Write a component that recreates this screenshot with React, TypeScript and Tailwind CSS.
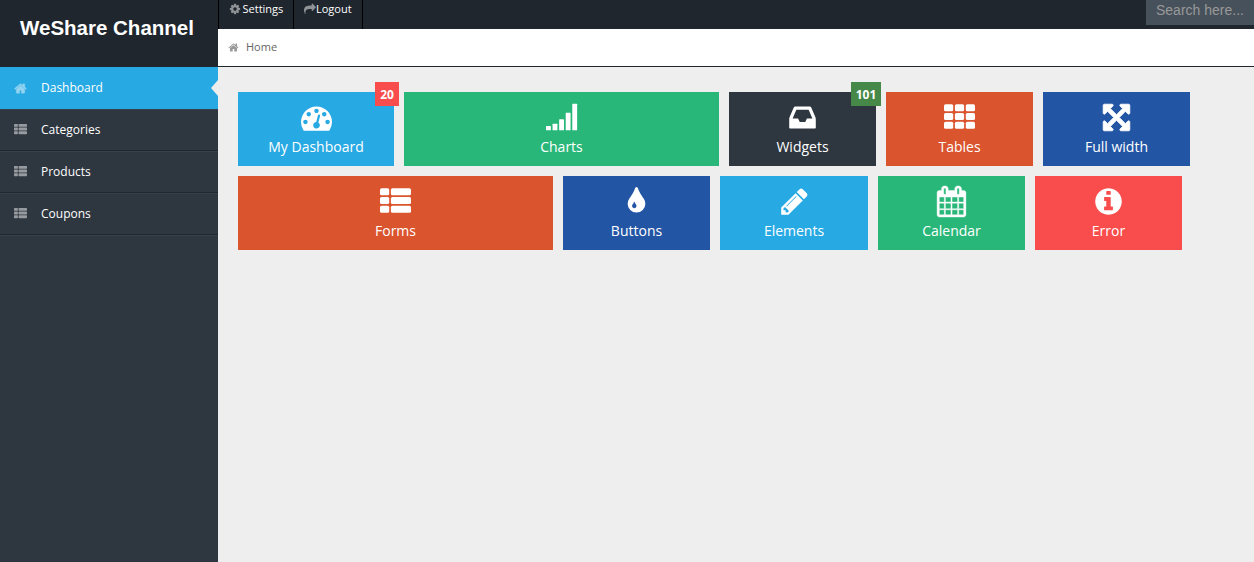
import React from "react";

const paths = {
  dashboard: "M384 1152q0-53-37.5-90.5t-90.5-37.5-90.5 37.5-37.5 90.5 37.5 90.5 90.5 37.5 90.5-37.5 37.5-90.5zm192-448q0-53-37.5-90.5t-90.5-37.5-90.5 37.5-37.5 90.5 37.5 90.5 90.5 37.5 90.5-37.5 37.5-90.5zm428 481l101-382q6-26-7.5-48.5t-38.5-29.5-48 6.5-30 39.5l-101 382q-60 5-107 43.5t-63 98.5q-20 77 20 146t117 89 146-20 89-117q16-60-6-117t-72-91zm660-33q0-53-37.5-90.5t-90.5-37.5-90.5 37.5-37.5 90.5 37.5 90.5 90.5 37.5 90.5-37.5 37.5-90.5zm-640-640q0-53-37.5-90.5t-90.5-37.5-90.5 37.5-37.5 90.5 37.5 90.5 90.5 37.5 90.5-37.5 37.5-90.5zm448 192q0-53-37.5-90.5t-90.5-37.5-90.5 37.5-37.5 90.5 37.5 90.5 90.5 37.5 90.5-37.5 37.5-90.5zm320 448q0 261-141 483-19 29-54 29h-1402q-35 0-54-29-141-221-141-483 0-182 71-348t191-286 286-191 348-71 348 71 286 191 191 286 71 348z",
  inbox: "M1151 960h316q-1-3-2.5-8t-2.5-8l-212-496h-708l-212 496q-1 2-2.5 8t-2.5 8h316l95 192h320zm513 30v482q0 26-19 45t-45 19h-1408q-26 0-45-19t-19-45v-482q0-62 25-123l238-552q10-25 36.5-42t52.5-17h832q26 0 52.5 17t36.5 42l238 552q25 61 25 123z",
  expand: "M1411 541l-355 355 355 355 144-144q29-31 70-14 39 17 39 59v448q0 26-19 45t-45 19h-448q-42 0-59-40-17-39 14-69l144-144-355-355-355 355 144 144q31 30 14 69-17 40-59 40h-448q-26 0-45-19t-19-45v-448q0-42 40-59 39-17 69 14l144 144 355-355-355-355-144 144q-19 19-45 19-12 0-24-5-40-17-40-59v-448q0-26 19-45t45-19h448q42 0 59 40 17 39-14 69l-144 144 355 355 355-355-144-144q-31-30-14-69 17-40 59-40h448q26 0 45 19t19 45v448q0 42-39 59-13 5-25 5-26 0-45-19z",
  drop: "M896 1152q0-36-20-69-1-1-15.5-22.5t-25.5-38-25-44-21-50.5q-4-16-21-16t-21 16q-7 23-21 50.5t-25 44-25.5 38-15.5 22.5q-20 33-20 69 0 53 37.5 90.5t90.5 37.5 90.5-37.5 37.5-90.5zm512-128q0 212-150 362t-362 150-362-150-150-362q0-145 81-275 6-9 62.5-90.5t101-151 99.5-178 83-201.5q9-30 34-47t51-17 51.5 17 33.5 47q28 93 83 201.5t99.5 178 101 151 62.5 90.5q81 127 81 275z",
  pencil: "M491 1536l91-91-235-235-91 91v107h128v128h107zm523-928q0-22-22-22-10 0-17 7l-542 542q-7 7-7 17 0 22 22 22 10 0 17-7l542-542q7-7 7-17zm-54-192l416 416-832 832h-416v-416zm683 96q0 53-37 90l-166 166-416-416 166-165q36-38 90-38 53 0 91 38l235 234q37 39 37 91z",
  calendar: "M192 1664h288v-288h-288v288zm352 0h320v-288h-320v288zm-352-352h288v-320h-288v320zm352 0h320v-320h-320v320zm-352-384h288v-288h-288v288zm736 736h320v-288h-320v288zm-384-736h320v-288h-320v288zm768 736h288v-288h-288v288zm-384-352h320v-320h-320v320zm-352-864v-288q0-13-9.5-22.5t-22.5-9.5h-64q-13 0-22.5 9.5t-9.5 22.5v288q0 13 9.5 22.5t22.5 9.5h64q13 0 22.5-9.5t9.5-22.5zm736 864h288v-320h-288v320zm-384-384h320v-288h-320v288zm384 0h288v-288h-288v288zm32-480v-288q0-13-9.5-22.5t-22.5-9.5h-64q-13 0-22.5 9.5t-9.5 22.5v288q0 13 9.5 22.5t22.5 9.5h64q13 0 22.5-9.5t9.5-22.5zm384-64v1280q0 52-38 90t-90 38h-1408q-52 0-90-38t-38-90v-1280q0-52 38-90t90-38h128v-96q0-66 47-113t113-47h64q66 0 113 47t47 113v96h384v-96q0-66 47-113t113-47h64q66 0 113 47t47 113v96h128q52 0 90 38t38 90z",
  info: "M1152 1376v-160q0-14-9-23t-23-9h-96v-512q0-14-9-23t-23-9h-320q-14 0-23 9t-9 23v160q0 14 9 23t23 9h96v320h-96q-14 0-23 9t-9 23v160q0 14 9 23t23 9h448q14 0 23-9t9-23zm-128-896v-160q0-14-9-23t-23-9h-192q-14 0-23 9t-9 23v160q0 14 9 23t23 9h192q14 0 23-9t9-23zm640 416q0 209-103 385.5t-279.5 279.5-385.5 103-385.5-103-279.5-279.5-103-385.5 103-385.5 279.5-279.5 385.5-103 385.5 103 279.5 279.5 103 385.5z",
  home: "M1472 992v480q0 26-19 45t-45 19h-384v-384h-256v384h-384q-26 0-45-19t-19-45v-480q0-1 .5-3t.5-3l575-474 575 474q1 2 1 6zm223-69l-62 74q-8 9-21 11h-3q-13 0-21-7l-692-577-692 577q-12 8-24 7-13-2-21-11l-62-74q-8-10-7-23.5t11-21.5l719-599q32-26 76-26t76 26l244 204v-195q0-14 9-23t23-9h192q14 0 23 9t9 23v408l219 182q10 8 11 21.5t-7 23.5z",
  cog: "M1152 896q0-106-75-181t-181-75-181 75-75 181 75 181 181 75 181-75 75-181zm512-109v222q0 12-8 23t-20 13l-185 28q-19 54-39 91 35 50 107 138 10 12 10 25t-9 23q-27 37-99 108t-94 71q-12 0-26-9l-138-108q-44 23-91 38-16 136-29 186-7 28-36 28h-222q-14 0-24.5-8.5t-11.5-21.5l-28-184q-49-16-90-37l-141 107q-10 9-25 9-14 0-25-11-126-114-165-168-7-10-7-23 0-12 8-23 15-21 51-66.5t54-70.5q-27-50-41-99l-183-27q-13-2-21-12.5t-8-23.5v-222q0-12 8-23t19-13l186-28q14-46 39-92-40-57-107-138-10-12-10-24 0-10 9-23 26-36 98.5-107.5t94.5-71.5q13 0 26 10l138 107q44-23 91-38 16-136 29-186 7-28 36-28h222q14 0 24.5 8.5t11.5 21.5l28 184q49 16 90 37l142-107q9-9 24-9 13 0 25 10 129 119 165 170 7 8 7 22 0 12-8 23-15 21-51 66.5t-54 70.5q26 50 41 98l183 28q13 2 21 12.5t8 23.5z",
  share: "M1792 640q0 26-19 45l-512 512q-19 19-45 19t-45-19-19-45v-256h-224q-98 0-175.5 6t-154 21.5-133 42.5-105.5 69.5-80 101-48.5 138.5-17.5 181q0 55 5 123 0 6 2.5 23.5t2.5 26.5q0 15-8.5 25t-23.5 10q-16 0-28-17-7-9-13-22t-13.5-30-10.5-24q-127-285-127-451 0-199 53-333 162-403 875-403h224v-256q0-26 19-45t45-19 45 19l512 512q19 19 19 45z",
};

type IconName = keyof typeof paths | "signal" | "grid" | "list";

const gridRows = [128, 633, 1138];

function Icon({ name, className }: { name: IconName; className: string }) {
  let body: React.ReactNode;
  if (name === "signal") {
    body = [256, 384, 640, 1024, 1536].map((h, i) => (
      <rect key={i} x={i * 380} y={1640 - h} width={280} height={h} rx={24} />
    ));
  } else if (name === "grid") {
    body = gridRows.flatMap((y) =>
      [0, 630, 1260].map((x) => (
        <rect key={`${x}-${y}`} x={x} y={y} width={532} height={405} rx={90} />
      )),
    );
  } else if (name === "list") {
    body = gridRows.map((y) => (
      <g key={y}>
        <rect x={0} y={y} width={532} height={405} rx={90} />
        <rect x={630} y={y} width={1162} height={405} rx={90} />
      </g>
    ));
  } else {
    body = <path d={paths[name]} />;
  }
  return (
    <svg viewBox="0 0 1792 1792" fill="currentColor" className={`shrink-0 overflow-visible ${className}`}>
      {body}
    </svg>
  );
}

type TileData = { label: string; icon: IconName; iconClass?: string; box: string; badge?: string; badgeColor?: string };

const rows: TileData[][] = [
  [
    { label: "My Dashboard", icon: "dashboard", box: "w-[156px] bg-[#27a9e3]", badge: "20", badgeColor: "w-6 bg-[#f94d4d]" },
    { label: "Charts", icon: "signal", box: "w-[315px] bg-[#28b779]" },
    { label: "Widgets", icon: "inbox", box: "w-[147px] bg-[#2e363f]", badge: "101", badgeColor: "w-[30px] bg-[#468847]" },
    { label: "Tables", icon: "grid", box: "w-[147px] bg-[#da542e]" },
    { label: "Full width", icon: "expand", iconClass: "stroke-current stroke-[50]", box: "w-[147px] bg-[#2255a4]" },
  ],
  [
    { label: "Forms", icon: "list", box: "w-[315px] bg-[#da542e]" },
    { label: "Buttons", icon: "drop", box: "w-[147px] bg-[#2255a4]" },
    { label: "Elements", icon: "pencil", box: "w-[148px] bg-[#27a9e3]" },
    { label: "Calendar", icon: "calendar", iconClass: "stroke-current stroke-[24]", box: "w-[147px] bg-[#28b779]" },
    { label: "Error", icon: "info", box: "w-[147px] bg-[#f94d4d]" },
  ],
];

function Tile({ label, icon, iconClass = "", box, badge, badgeColor }: TileData) {
  return (
    <div className={`relative flex h-[74px] flex-col items-center pt-[10px] text-white ${box}`}>
      <Icon name={icon} className={`size-[31px] ${iconClass}`} />
      <span className="mt-1 text-[14px] leading-5 whitespace-nowrap">{label}</span>
      {badge && (
        <span className={`absolute -top-[10px] -right-[5px] flex h-6 justify-center text-[12px] leading-[25px] font-bold ${badgeColor}`}>
          {badge}
        </span>
      )}
    </div>
  );
}

export default function App() {
  return (
    <div className="flex h-[562px] w-full overflow-hidden bg-[#eeeeee] font-['Open_Sans',sans-serif] text-[12px]">
      <aside className="flex w-[218px] shrink-0 flex-col bg-[#2e363f]">
        <h1 className="h-[67px] bg-[#1f262d] pt-[14px] pl-5 font-['Liberation_Sans',sans-serif] text-[20.5px] leading-7 font-bold whitespace-nowrap text-white">
          WeShare Channel
        </h1>
        <nav>
          <a className="relative flex h-[42px] items-center bg-[#27a9e3] pl-[14px] text-white">
            <Icon name="home" className="mr-px size-[13px] stroke-current stroke-[60] opacity-50" />
            <span className="ml-[13px]">Dashboard</span>
            <span className="absolute top-[13px] right-0 size-0 border-y-[8px] border-r-[7px] border-y-transparent border-r-[#eeeeee]" />
          </a>
          {["Categories", "Products", "Coupons"].map((label) => (
            <a key={label} className="flex h-[42px] items-center border-t border-b border-t-[#37414b] border-b-[#1f262d] pl-[14px] text-white">
              <Icon name="list" className="mb-px size-[13px] opacity-50" />
              <span className="ml-[14px]">{label}</span>
            </a>
          ))}
          <div className="h-px bg-[#37414b]" />
        </nav>
      </aside>
      <div className="flex min-w-0 flex-1 flex-col">
        <header className="flex h-[29px] shrink-0 bg-[#1f262d] text-[11px] leading-[18px] text-white">
          <a className="flex h-full w-[76px] border-x border-black pl-[9.5px]">
            <Icon name="cog" className="mt-[3px] mr-[2px] size-3 opacity-50" />
            Settings
          </a>
          <a className="flex h-full w-[69px] border-r border-black pl-[10px]">
            <Icon name="share" className="mt-[3px] size-3 opacity-50" />
            Logout
          </a>
          <div className="ml-auto h-[25px] w-[108px] bg-[#47515b] pl-[10px] font-['Liberation_Sans',sans-serif] text-[14px] leading-5 whitespace-nowrap text-[#999999]">
            Search here...
          </div>
        </header>
        <div className="flex h-[38px] shrink-0 items-center border-b border-[#1f262d] bg-white pl-[9.5px] text-[11px] text-[#666666]">
          <Icon name="home" className="size-[11px] text-[#999999]" />
          <span className="ml-[7.5px]">Home</span>
        </div>
        <main className="flex flex-col gap-[10px] pt-[25px] pl-5">
          {rows.map((row, i) => (
            <div key={i} className="flex gap-[10px]">
              {row.map((tile) => (
                <Tile key={tile.label} {...tile} />
              ))}
            </div>
          ))}
        </main>
      </div>
    </div>
  );
}
